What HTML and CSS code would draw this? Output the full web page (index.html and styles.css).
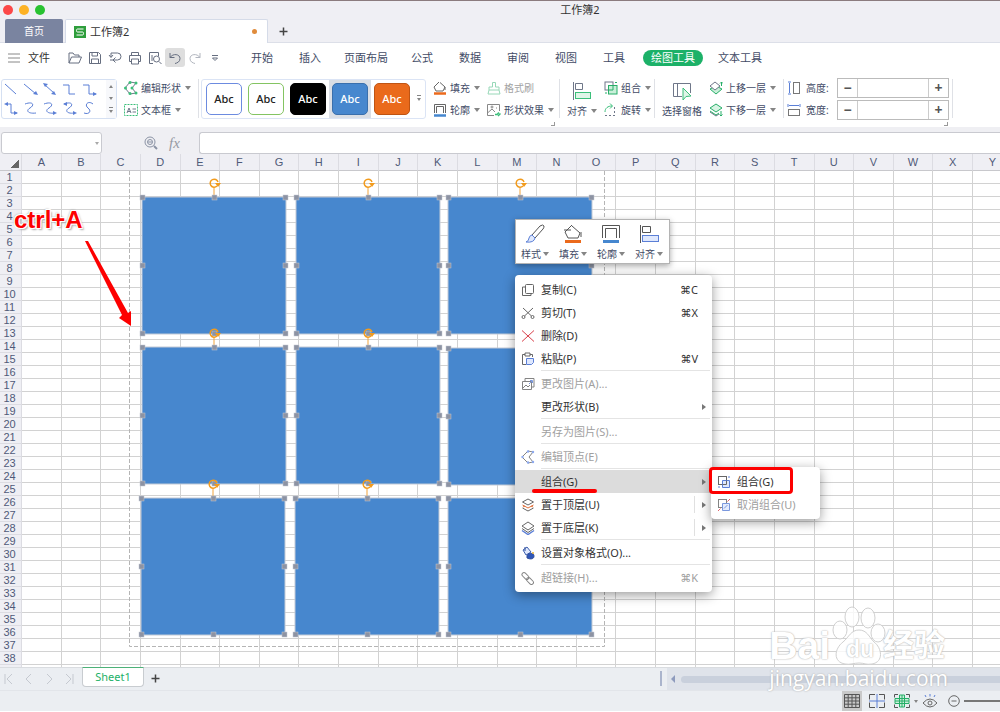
FILE: index.html
```html
<!DOCTYPE html>
<html lang="zh-CN">
<head>
    <meta charset="UTF-8">
    <meta name="viewport" content="width=device-width, initial-scale=1.0">
    <title>工作簿2</title>
    <link rel="stylesheet" href="styles.css">
</head>
<body>
    <header class="titlebar">
        <div class="lights"><i class="red"></i><i class="yellow"></i><i class="green"></i></div>
        <div class="window-title">工作簿2</div>
        <div class="doc-tabs">
            <button class="home-tab">首页</button>
            <button class="doc-tab">
                <svg width="12" height="12" viewBox="0 0 12 12"><rect width="12" height="12" fill="#2f9e3c"/><path d="M9.500 3H3.500Q2.500 3 2.500 4.500T3.500 6H8.500Q9.500 6 9.500 7.500T8.500 9H2.500" fill="none" stroke="#fff"/></svg>
                <span>工作簿2</span><i class="unsaved"></i>
            </button>
            <button class="new-tab" aria-label="新建"><svg width="9" height="9" viewBox="0 0 9 9"><path d="M4.500 .5v8M.5 4.500h8" stroke="#444" stroke-width="1.500"/></svg></button>
        </div>
    </header>

    <nav class="menubar">
        <button class="file-btn"><svg width="12" height="10" viewBox="0 0 12 10"><path d="M0 1h12M0 5h12M0 9h12" stroke="#888"/></svg>文件</button>
        <div class="quick">
            <button aria-label="打开"><svg viewBox="0 0 14 14"><path d="M1 12V2h4l1.500 2H11v2M1 12l2.500-6H13.500L11 12z"/></svg></button>
            <button aria-label="保存"><svg viewBox="0 0 14 14"><path d="M1.500 1.500h9l2 2v9h-11zM4 1.500v3.500h5.500V1.500M3.500 12.500V8h7v4.500"/></svg></button>
            <button aria-label="输出"><svg viewBox="0 0 14 14"><path d="M3 2h6.500a3.300 3.300 0 0 1 0 7H5M3 2v4M1 4l2 2.500L5 4M7.500 6.500L5 9l2.500 2.500M2 9h3"/></svg></button>
            <button aria-label="打印"><svg viewBox="0 0 14 14"><path d="M3.500 4.500v-3h7v3M3.500 10.500h-2v-6h11v6h-2M3.500 8h7v5h-7z"/></svg></button>
            <button aria-label="打印预览"><svg viewBox="0 0 14 14"><path d="M5 12.500H1.500v-11h9V5M4 4v6"/><circle cx="8.500" cy="8" r="3"/><path d="M11 10.500l2.500 2.500"/></svg></button>
            <button class="on" aria-label="撤销"><svg viewBox="0 0 14 14"><path d="M2 2v4.500h4.500M2 6.500C5 2 12 3 12 7.500 12 11 9 12 7 12.500"/></svg></button>
            <button class="dim" aria-label="恢复"><svg viewBox="0 0 14 14"><path d="M12 2v4.500H7.500M12 6.500C9 2 2 3 2 7.500 2 11 5 12 7 12.500"/></svg></button>
            <button aria-label="更多"><svg viewBox="0 0 14 14"><path d="M4 4.500h6M4.500 7L7 9.500 9.500 7z"/></svg></button>
        </div>
        <div class="menus">
            <button>开始</button><button>插入</button><button>页面布局</button><button>公式</button><button>数据</button><button>审阅</button><button>视图</button><button>工具</button><button class="active">绘图工具</button><button>文本工具</button>
        </div>
    </nav>

    <section class="ribbon">
        <div class="line-gallery">
            <svg viewBox="0 0 100 38" width="100" height="38">
                <g fill="none" stroke="#5b7fd6">
                    <path d="M3 4l11 10M22 4l12 10M43 5l9 8M61 5h6v9h6M81 5h6v9h7"/>
                    <path d="M4 24h5v9h6M23 24c8-3 10 1 5 4s-1 6 6 5M42 24c8-3 10 1 5 4s-1 6 6 5M62 24c8-3 10 1 5 4s-1 6 5 5M91 24c-5-4-9 1-5 4s1 7-4 5"/>
                </g>
                <g fill="#5b7fd6">
                    <path d="M36 15l-5-1 3-3zM54 15l-5-1 3-3zM41 3l5 1-3 3zM95 14l-4-2v4zM2 24l4-2v4zM16 33l-4-2v4zM55 33l-4-2v4zM61 24l4-2v4zM75 33l-4-2v4z"/>
                </g>
            </svg>
            <div class="scroller"><i class="caret up"></i><i class="caret"></i><i class="caret more"></i></div>
        </div>
        <div class="tools edit-tools">
            <button><svg viewBox="0 0 14 14"><path d="M12 2L6 1 1 7l5 6 6-1-4-5z" stroke="#6f7789"/><g fill="#3bbf7a"><circle cx="12" cy="2" r="1.500"/><circle cx="6" cy="1.500" r="1.500"/><circle cx="1.500" cy="7" r="1.500"/><circle cx="6" cy="12.500" r="1.500"/><circle cx="12" cy="12" r="1.500"/><circle cx="8" cy="7" r="1.500"/></g></svg>编辑形状<i class="caret"></i></button>
            <button><svg viewBox="0 0 14 14"><path d="M.5 1.500h13v11H.5z" stroke="#3bbf7a" stroke-dasharray="2 1"/><path d="M3 10l2-5 2 5M3.500 8.500h3M8.500 6H12M8.500 9H12" stroke="#6f7789"/></svg>文本框<i class="caret"></i></button>
        </div>
        <i class="sep"></i>
        <div class="style-gallery">
            <button class="st blue-line"><b>Abc</b></button>
            <button class="st green-line"><b>Abc</b></button>
            <button class="st black"><b>Abc</b></button>
            <button class="st blue picked"><b>Abc</b></button>
            <button class="st orange"><b>Abc</b></button>
            <i class="caret more"></i>
        </div>
        <div class="tools paint-tools">
            <button><svg viewBox="0 0 14 14"><path d="M6 1L1 6l2 4h7l2-4-5-4.500M12 6v3" stroke="#666"/><path d="M1 12.500h12" stroke="#eb6a1c" stroke-width="2.500"/></svg>填充<i class="caret"></i></button>
            <button class="dim"><svg viewBox="0 0 14 14"><path d="M5.500 6V1.500h3V6H12v3H2V6zM2 9l-1 4h12l-1-4" stroke="#98d8b8"/></svg>格式刷</button>
            <button><svg viewBox="0 0 14 14"><path d="M1.500 10V1.500h11V10M3.500 10V3.500h7V10" stroke="#666"/><path d="M1 12.500h12" stroke="#4687cf" stroke-width="2.500"/></svg>轮廓<i class="caret"></i></button>
            <button><svg viewBox="0 0 14 14"><path d="M7 12.500H.5v-11h12V8M.5 10L5 6l3 3M9.500 4.500v1" stroke="#888"/><circle cx="5" cy="4" r="1" stroke="#888"/><path d="M8 11.500h2l2-2M11 13l2.500-2.500" stroke="#3bbf7a" stroke-width="1.500"/></svg>形状效果<i class="caret"></i></button>
        </div>
        <i class="corner"></i>
        <i class="sep"></i>
        <button class="big"><svg width="20" height="20" viewBox="0 0 20 20"><path d="M1.500 1v18M3.500 2.500h7v6h-7z" stroke="#6f7789"/><rect x="3.500" y="11.500" width="15" height="6" fill="#e0f5e8" stroke="#3bbf7a"/></svg><span>对齐<i class="caret"></i></span></button>
        <div class="tools">
            <button><svg viewBox="0 0 14 14"><rect x="1" y="1" width="8" height="8" stroke="#6f7789"/><rect x="4.500" y="4.500" width="8.500" height="8.500" fill="#c9efd9" stroke="#27ae68"/><path d="M4.500 9H9V4.500M11 1.500h2M1 12h2" stroke="#27ae68"/></svg>组合<i class="caret"></i></button>
            <button><svg viewBox="0 0 14 14"><path d="M1 9C1 5 4 3 8 3M6 .5L8.500 3 6 5.500" stroke="#3bbf7a"/><path d="M1 12.500h12M10.500 4v9" stroke="#6f7789" stroke-dasharray="2 2"/></svg>旋转<i class="caret"></i></button>
        </div>
        <i class="sep"></i>
        <button class="big"><svg width="20" height="20" viewBox="0 0 20 20"><path d="M10 15.500H1.500v-13h17V12M5.500 2.500v13" stroke="#6f7789"/><path d="M11 7v12l3-3.500 5-.5z" fill="#e0f5e8" stroke="#3bbf7a"/></svg><span>选择窗格</span></button>
        <div class="tools layer-tools">
            <button><svg viewBox="0 0 14 14"><path d="M1 8l6-3 6 3-6 5z" fill="#c9efd9" stroke="#27ae68"/><path d="M1 5l5-4 5 4-5 4z" fill="#fff" stroke="#6f7789"/><path d="M12.500 5V1M11 2.500L12.500 1 14 2.500" stroke="#27ae68"/></svg>上移一层<i class="caret"></i></button>
            <button><svg viewBox="0 0 14 14"><path d="M1 9l6 4 3-2" stroke="#6f7789"/><path d="M1 5l6-4 6 4-6 4z" fill="#d8f4e4" stroke="#27ae68"/><path d="M1 8l6 4 3-2M12 8v5M10.500 11.500L12 13l1.500-1.500" stroke="#27ae68"/></svg>下移一层<i class="caret"></i></button>
        </div>
        <i class="sep"></i>
        <div class="sizes">
            <div class="size-row">
                <svg width="14" height="14" viewBox="0 0 14 14"><path d="M1 1h3M1 13h3M2.500 2v10" stroke="#5b7fd6"/><rect x="6.500" y="1.500" width="6" height="11" stroke="#777"/></svg>
                <label for="height">高度:</label>
                <div class="stepper"><button aria-label="减小高度">−</button><input id="height" type="text"><button aria-label="增大高度">+</button></div>
            </div>
            <div class="size-row">
                <svg width="14" height="14" viewBox="0 0 14 14"><path d="M1 1v3M13 1v3M2 2.500h10" stroke="#5b7fd6"/><rect x="1.500" y="6.500" width="11" height="6" stroke="#777"/></svg>
                <label for="width">宽度:</label>
                <div class="stepper"><button aria-label="减小宽度">−</button><input id="width" type="text"><button aria-label="增大宽度">+</button></div>
            </div>
        </div>
        <i class="corner"></i>
        <i class="sep"></i>
    </section>

    <section class="formula-bar">
        <div class="name-box"><input type="text" aria-label="名称框"><i class="caret"></i></div>
        <div class="formula-tools">
            <svg width="14" height="14" viewBox="0 0 14 14" fill="none" stroke="#8b93a5"><circle cx="6" cy="6" r="5"/><circle cx="6" cy="6" r="2.500"/><path d="M4 6h4" /><path d="M10 10l3 3" stroke-width="2"/></svg>
            <span class="fx">fx</span>
        </div>
        <input class="formula" type="text" aria-label="编辑栏">
    </section>

    <main class="sheet">
        <table class="grid" id="grid"></table>

        <svg class="drawing" width="640" height="500" viewBox="0 0 640 500">
            <defs>
                <g id="box">
                    <rect width="144" height="137" fill="#4787ce" stroke="#c3cad6"/>
                    <path d="M72 0v-9" stroke="#f2a33a"/>
                    <path d="M75 -11a4 4 0 1 1 1-4" fill="none" stroke="#f29b1d" stroke-width="1.500"/>
                    <path d="M73 -14h6l-3 4z" fill="#f29b1d"/>
                    <g fill="#8d93a3" stroke="#c3c8d2" stroke-width=".5">
                        <rect x="-2" y="-2" width="5" height="5"/><rect x="70" y="-2" width="5" height="5"/><rect x="141" y="-2" width="5" height="5"/>
                        <rect x="-2" y="66" width="5" height="5"/><rect x="141" y="66" width="5" height="5"/>
                        <rect x="-2" y="134" width="5" height="5"/><rect x="70" y="134" width="5" height="5"/><rect x="141" y="134" width="5" height="5"/>
                    </g>
                </g>
            </defs>
            <path d="M129.500 17v475.500h475V17" fill="none" stroke="#b5b5b5" stroke-dasharray="4 2"/>
            <use href="#box" x="142" y="43"/><use href="#box" x="296" y="43"/><use href="#box" x="448" y="43"/>
            <use href="#box" x="142" y="193"/><use href="#box" x="296" y="193"/><use href="#box" x="448" y="194"/>
            <use href="#box" x="141" y="344"/><use href="#box" x="295" y="344"/><use href="#box" x="448" y="344"/>
            <path class="arrow" d="M85 87l3 0 40 72 3-2v15l-12-8 3-3z" fill="#fd0000"/>
        </svg>
        <div class="note">ctrl+A</div>

        <div class="mini-bar">
            <button><svg viewBox="0 0 22 22"><path d="M8 12l8-9q3-2 4 0 0 2-1 3l-8 9z" stroke="#555"/><path d="M8 12l3 3q-1 5-9 4 3-1 3-4 1-3 3-3z" fill="#dfe8fd" stroke="#5b7fd6"/></svg><span>样式<i class="caret"></i></span></button>
            <button><svg viewBox="0 0 22 22"><path d="M10 2L3 9l3 6h10l2-5-8-7M2 7h7M19 9v5" stroke="#555"/><path d="M3 18.500h16" stroke="#eb6a1c" stroke-width="3"/></svg><span>填充<i class="caret"></i></span></button>
            <button><svg viewBox="0 0 22 22"><path d="M2.500 15V2.500h17V15M5.500 15V5.500h11V15" stroke="#555"/><path d="M3 18.500h16" stroke="#4687cf" stroke-width="3"/></svg><span>轮廓<i class="caret"></i></span></button>
            <button><svg viewBox="0 0 22 22"><path d="M2.500 2v18M4.500 3.500h8v6h-8z" stroke="#555"/><rect x="4.500" y="12.500" width="16" height="6" fill="#dfe8fd" stroke="#5b7fd6"/></svg><span>对齐<i class="caret"></i></span></button>
        </div>

        <div class="menu context-menu">
            <button><svg viewBox="0 0 14 14"><rect x="4.500" y="1.500" width="8" height="9" rx="1"/><path d="M4 4H1.500v8.500H10V11"/></svg>复制(C)<kbd>⌘C</kbd></button>
            <button><svg viewBox="0 0 14 14"><path d="M2 2l8.500 8M12 2l-8.500 8"/><circle cx="2.500" cy="11" r="1.500"/><circle cx="11.500" cy="11" r="1.500"/></svg>剪切(T)<kbd>⌘X</kbd></button>
            <button><svg viewBox="0 0 14 14"><path d="M1 1.500l12 11M13 1.500l-12 11" stroke="#d9404a"/></svg>删除(D)</button>
            <button><svg viewBox="0 0 14 14"><path d="M4 2.500H1.500v10H5M9 2.500h2.500V5M4 1h5v3H4z"/><path d="M5.500 6.500h7v4l-2 2h-5z" fill="#dfe8fd" stroke="#5b7fd6"/></svg>粘贴(P)<kbd>⌘V</kbd></button>
            <hr>
            <button disabled><svg viewBox="0 0 14 14"><path d="M4 4V1.500h9V10h-2.500M1.500 4.500h9v8h-9zM2 11l3-3 2 2 2-2"/><path d="M8 7l3-3M9 3.500h2.500V6" stroke="#5b7fd6"/></svg>更改图片(A)...</button>
            <button><svg></svg>更改形状(B)<i class="sub"></i></button>
            <hr>
            <button disabled><svg></svg>另存为图片(S)...</button>
            <hr>
            <button disabled><svg viewBox="0 0 14 14"><path d="M12 2L7 1 1 7l6 6 5-1-4-5z"/><g fill="#6f93ea" stroke="none"><circle cx="12" cy="2" r="1.200"/><circle cx="7" cy="1.500" r="1.200"/><circle cx="1.500" cy="7" r="1.200"/><circle cx="7" cy="12.500" r="1.200"/><circle cx="12" cy="12" r="1.200"/></g></svg>编辑顶点(E)</button>
            <hr>
            <button class="hover"><svg></svg>组合(G)<i class="sub"></i></button>
            <button class="split"><svg viewBox="0 0 14 14"><path d="M1.500 10L7 13l5.500-3M1.500 4L7 1l5.500 3L7 7z"/><path d="M1.500 7L7 10l5.500-3M2 9l2-1M12 9l-2-1" stroke="#e0703a"/></svg>置于顶层(U)<i class="sub"></i></button>
            <button class="split"><svg viewBox="0 0 14 14"><path d="M1 5l6-4 6 4-6 4zM1 7.500l6 4 6-4"/><path d="M1 9.500l6 4 6-4" stroke="#5b7fd6" stroke-width="1.500"/></svg>置于底层(K)<i class="sub"></i></button>
            <hr>
            <button><svg viewBox="0 0 14 14"><path d="M2 4l4-3 4 5-5 3z" fill="#dfe8fd" stroke="#3e5fae"/><path d="M4 1v4M6 10c0-3 7-4 7 0s-5 3-7 2z" fill="#2e56b8" stroke="#2e4d99"/><circle cx="12" cy="7" r="1" fill="#e8b33a" stroke="none"/></svg>设置对象格式(O)...</button>
            <hr>
            <button disabled><svg viewBox="0 0 14 14"><rect x="-1" y="3" width="8" height="4" rx="2" transform="rotate(45 3 5) translate(1 -1)"/><rect x="5" y="8" width="8" height="4" rx="2" transform="rotate(45 9 10)"/></svg>超链接(H)...<kbd>⌘K</kbd></button>
        </div>

        <div class="menu sub-menu">
            <button><svg viewBox="0 0 14 14"><rect x="1.500" y="1.500" width="8" height="8"/><path d="M5.500 5.500h7v7h-7z" fill="#dfe8fd" stroke="#5b7fd6"/><path d="M5.500 9.500h4v-4"/><path d="M11 2h2M1 12h2" stroke="#5b7fd6"/></svg>组合(G)</button>
            <button disabled><svg viewBox="0 0 14 14"><rect x="1.500" y="1.500" width="8" height="8"/><path d="M5.500 5.500h7v7h-7z" fill="#dfe8fd" stroke="#5b7fd6"/><path d="M7 10.500l3.500-3.500" stroke="#5b7fd6"/><path d="M10.500 3.500L13 1M1 13l2.500-2.500" stroke="#d9404a"/></svg>取消组合(U)</button>
        </div>
        <i class="mark-line"></i>
        <i class="mark-box"></i>
    </main>

    <footer class="tabs-bar">
        <div class="nav-btns">
            <button aria-label="第一张"><svg viewBox="0 0 10 12"><path d="M1 1v10M8 1L3 6l5 5"/></svg></button>
            <button aria-label="上一张"><svg viewBox="0 0 10 12"><path d="M7 1L2 6l5 5"/></svg></button>
            <button aria-label="下一张"><svg viewBox="0 0 10 12"><path d="M3 1l5 5-5 5"/></svg></button>
            <button aria-label="最后一张"><svg viewBox="0 0 10 12"><path d="M9 1v10M2 1l5 5-5 5"/></svg></button>
        </div>
        <button class="sheet-tab">Sheet1</button>
        <button class="add-sheet" aria-label="添加工作表"><svg width="9" height="9" viewBox="0 0 9 9"><path d="M4.500 .5v8M.5 4.500h8" stroke="#444" stroke-width="1.500"/></svg></button>
        <i class="splitter"></i>
        <div class="hscroll"><i class="left"></i><i class="thumb"></i></div>
    </footer>

    <footer class="status">
        <div class="views">
            <button class="on" aria-label="普通视图"><svg viewBox="0 0 16 14"><path d="M.5 .5h15v13H.5zM.5 3.800h15M.5 7h15M.5 10.200h15M4.200 .5v13M8 .5v13M11.800 .5v13" stroke="#555"/></svg></button>
            <button aria-label="分页预览"><svg viewBox="0 0 16 14"><path d="M6 .5H.5v5M.5 8.500v5H6M10 .5h5.500v5M15.500 8.500v5H10" stroke="#555"/><path d="M8 0v14M0 7h16" stroke="#5b7fd6"/></svg></button>
            <button aria-label="阅读模式"><svg viewBox="0 0 16 14"><path d="M5.500 1h5v12h-5zM1 4.500h14v5H1zM8 1v12M1 7h14" fill="#c9efd9" stroke="#27ae68"/><path d="M4 .5H.5v3M.5 10.500v3H4M12 .5h3.500v3M15.500 10.500v3H12" stroke="#555"/></svg></button>
            <i class="caret"></i>
            <button aria-label="护眼模式"><svg viewBox="0 0 16 14"><path d="M1 9q7-8 14 0-7 8-14 0z" stroke="#666"/><circle cx="8" cy="9" r="2" stroke="#666"/><path d="M8 0v2.500M3 1l1 2M13 1l-1 2" stroke="#5b7fd6"/></svg></button>
        </div>
        <button class="zoom-out" aria-label="缩小"><svg width="12" height="12" viewBox="0 0 12 12"><circle cx="6" cy="6" r="5.300" fill="none" stroke="#666"/><path d="M3.500 6h5" stroke="#666"/></svg></button>
        <div class="zoom-wrap"><input class="zoom" type="range" aria-label="缩放"></div>
    </footer>

    <div class="watermark">
        <div class="brand">
            <span class="bai">Bai</span>
            <span class="paw"><svg width="56" height="60" viewBox="0 0 56 60"><g fill="#fff" fill-opacity=".8" stroke="#d0d0d0"><ellipse cx="10" cy="24" rx="7" ry="9"/><ellipse cx="22" cy="11" rx="7" ry="10"/><ellipse cx="38" cy="12" rx="7" ry="10"/><ellipse cx="48" cy="27" rx="7" ry="9"/><path d="M29 24c8 0 10 7 15 12 8 6 10 20-2 22-6 1-8-1-13-1s-9 2-14 1C3 56 4 43 13 36c6-5 8-12 16-12z"/></g></svg><span class="du">du</span></span>
            <span class="jy">经验</span>
        </div>
        <div class="url">jingyan.baidu.com</div>
    </div>

    <script>
        const grid = document.getElementById("grid");
        const letters = "ABCDEFGHIJKLMNOPQRSTUVWXY".split("");
        const rows = 39;

        let html = "<thead><tr><th class='all'></th>";
        letters.forEach(function(l) {
            html += "<th>" + l + "</th>";
        });
        html += "</tr></thead><tbody>";
        for (let r = 1; r <= rows; r++) {
            html += "<tr><th>" + r + "</th>" + "<td></td>".repeat(letters.length) + "</tr>";
        }
        grid.innerHTML = html + "</tbody>";
    </script>
</body>
</html>
```

FILE: styles.css
```css
* {
    box-sizing: border-box;
}
body {
    margin: 0;
    height: 100vh;
    display: flex;
    flex-direction: column;
    overflow: hidden;
    position: relative;
    background: #fff;
    color: #424b66;
    font-family: "Noto Sans", "Noto Sans CJK SC", sans-serif;
    font-size: 11px;
    line-height: 16px;
}
button, input {
    font: inherit;
    color: inherit;
    margin: 0;
    padding: 0;
    border: 0;
    background: none;
    min-width: 0;
}
button {
    display: flex;
    align-items: center;
    white-space: nowrap;
}
svg {
    flex: none;
    display: block;
    fill: none;
}
i {
    flex: none;
    display: block;
}
.caret {
    border: 3px solid transparent;
    border-top: 4px solid #858585;
    border-bottom: 0;
}

/* title bar */
.titlebar {
    position: relative;
    flex: none;
    height: 43px;
    background: #efeff4;
    border-top: 1px solid #8b7b7e;
    border-bottom: 1px solid #dcdfe8;
}
.lights {
    display: flex;
    gap: 6px;
    padding: 4px 3px 0;
}
.lights i {
    width: 10px;
    height: 10px;
    border-radius: 50%;
}
.red { background: #fc4848; }
.yellow { background: #fdb225; }
.green { background: #28c231; }
.window-title {
    position: absolute;
    top: 1px;
    left: 0;
    right: 0;
    padding-left: 160px;
    text-align: center;
    color: #333;
}
.doc-tabs {
    display: flex;
    padding: 4px 0 0 5px;
    height: 28px;
}
.home-tab {
    width: 58px;
    justify-content: center;
    background: #7a84a0;
    color: #fff;
    font-size: 10px;
    border-radius: 2px 2px 0 0;
}
.doc-tab {
    width: 203px;
    margin-left: 2px;
    padding: 0 10px 0 8px;
    gap: 4px;
    background: #fff;
    border: 1px solid #d5dbe8;
    border-bottom: 0;
    border-radius: 2px 2px 0 0;
    color: #333;
}
.unsaved {
    width: 5px;
    height: 5px;
    margin-left: auto;
    border-radius: 50%;
    background: #e08c3c;
}
.new-tab {
    padding: 0 11px;
}

/* menu row */
.menubar {
    flex: none;
    display: flex;
    align-items: center;
    height: 29px;
    padding-left: 8px;
}
.file-btn {
    gap: 8px;
    color: #333;
}
.quick {
    display: flex;
    padding-left: 15px;
}
.quick button {
    width: 20px;
    height: 19px;
    justify-content: center;
    border-radius: 3px;
}
.quick svg {
    width: 14px;
    height: 14px;
    stroke: #666e80;
}
.quick .on {
    background: #dedede;
}
.quick .dim {
    opacity: .5;
}
.menus {
    display: flex;
    padding-left: 13px;
}
.menus button {
    min-width: 48px;
    padding: 0 10px;
    justify-content: center;
}
.menus .active {
    margin: 0 5px;
    padding: 0 8px;
    border-radius: 8px;
    background: #1cb168;
    color: #fff;
}

/* ribbon */
.ribbon {
    flex: none;
    display: flex;
    align-items: flex-start;
    height: 55px;
    padding: 7px 0 0 1px;
    font-size: 10px;
}
.sep {
    width: 1px;
    height: 39px;
    background: #dfe1e6;
}
.line-gallery {
    display: flex;
    justify-content: space-between;
    width: 116px;
    height: 40px;
    border: 1px solid #d5e0f2;
    border-radius: 3px;
}
.scroller {
    display: flex;
    flex-direction: column;
    align-items: center;
    justify-content: space-around;
    width: 10px;
    background: #f7f8fb;
}
.scroller .caret, .style-gallery .caret {
    border-width: 3px 2px 0;
}
.scroller .caret.up {
    border-width: 0 2px 3px;
    border-bottom: 3px solid #858585;
}
.caret.more {
    position: relative;
}
.caret.more::before {
    content: "";
    position: absolute;
    left: -2px;
    top: -6px;
    width: 4px;
    height: 1px;
    background: #858585;
}
.tools {
    display: grid;
    row-gap: 6px;
    padding-top: 1px;
}
.tools button {
    gap: 3px;
    height: 16px;
}
.tools svg {
    width: 14px;
    height: 14px;
}
.tools .caret {
    margin-left: 1px;
}
.tools .dim {
    color: #a3a3a3;
}
.edit-tools {
    margin: 0 7px;
}
.style-gallery {
    display: flex;
    align-items: center;
    width: 225px;
    height: 40px;
    margin-left: 2px;
    border: 1px solid #dbe4f5;
    border-radius: 3px;
}
.st {
    height: 38px;
    padding: 0 3px;
}
.st b {
    width: 36px;
    height: 32px;
    border: 1px solid #6c8be0;
    border-radius: 5px;
    line-height: 30px;
    font-size: 11px;
    font-weight: 500;
    text-align: center;
    color: #222;
    background: #fff;
}
.st.green-line b { border-color: #84c462; }
.st.black b { background: #000; border-color: #000; color: #fff; }
.st.blue b { background: #4787ce; border-color: #3a6fac; color: #fff; }
.st.orange b { background: #ea6a1b; border-color: #bf5413; color: #fff; }
.st.picked { background: #dadee5; }
.style-gallery .st:first-child {
    margin-left: 1px;
}
.style-gallery .caret {
    margin-left: 4px;
}
.paint-tools {
    grid-template-columns: auto auto;
    column-gap: 7px;
    margin: 0 6px 0 7px;
}
.corner {
    width: 4px;
    height: 4px;
    margin: 43px 0 0 -9px;
    border: solid #999;
    border-width: 0 1px 1px 0;
}
.corner + .sep {
    margin-left: 4px;
}
.big {
    flex-direction: column;
    margin: 2px 7px 0;
    gap: 2px;
}
.big span {
    display: flex;
    align-items: center;
    gap: 4px;
}
.tools + .sep {
    margin-left: 3px;
}
.edit-tools + .sep {
    margin-left: 0;
}
.layer-tools + .sep {
    margin-left: 7px;
}
.sizes {
    margin: -1px 0 0 3px;
}
.size-row {
    display: flex;
    align-items: center;
    height: 20px;
    margin-bottom: 2px;
}
.size-row label {
    width: 31px;
    margin-left: 5px;
    white-space: nowrap;
}
.stepper {
    display: flex;
    width: 112px;
    height: 20px;
    border: 1px solid #bbb;
}
.stepper button {
    width: 19px;
    justify-content: center;
    font-size: 14px;
    font-weight: bold;
    color: #555;
}
.stepper input {
    flex: 1;
    border: solid #ccc;
    border-width: 0 1px;
}
.sizes + .corner {
    margin-left: -5px;
}

/* name box and formula */
.formula-bar {
    flex: none;
    display: flex;
    align-items: center;
    height: 27px;
    padding: 5px 0 0 1px;
    background: #efeff3;
}
.name-box {
    display: flex;
    align-items: center;
    width: 101px;
    height: 22px;
    padding-right: 2px;
    border: 1px solid #c9cad0;
    border-radius: 3px;
    background: #fff;
}
.name-box input {
    flex: 1;
}
.name-box .caret {
    border-width: 3px 2px 0;
    opacity: .7;
}
.formula-tools {
    display: flex;
    align-items: center;
    gap: 11px;
    width: 97px;
    padding-left: 42px;
}
.fx {
    font-family: "Liberation Serif", serif;
    font-style: italic;
    font-size: 15px;
    color: #9599a3;
}
.formula {
    flex: 1;
    height: 22px;
    border: 1px solid #c9cad0;
    border-right: 0;
    border-radius: 3px 0 0 3px;
    background: #fff;
}

/* cells */
.sheet {
    position: relative;
    flex: 1;
    min-height: 0;
    overflow: hidden;
}
.grid {
    table-layout: fixed;
    width: calc(100% + 13px);
    border-collapse: separate;
    border-spacing: 0;
    font-family: "Liberation Sans", Arial, sans-serif;
    font-size: 11px;
    line-height: 12px;
}
.grid th, .grid td {
    height: 13px;
    padding: 0;
    border: solid #d2d2d2;
    border-width: 0 1px 1px 0;
}
.grid th {
    background: #efeff4;
    color: #4f5a78;
    font-weight: normal;
    border-color: #dcdce2;
}
.grid tbody th {
    padding-right: 2px;
}
.grid thead th {
    height: 17px;
    border-bottom-color: #c8c8cc;
}
.grid .all {
    width: 22px;
    background: linear-gradient(135deg, transparent 50%, #666 50%) 10px 5px / 9px 9px no-repeat #efeff4;
}
.drawing {
    position: absolute;
    left: 0;
    top: 0;
}
.note {
    position: absolute;
    left: 14px;
    top: 52px;
    font: bold 24px/28px "Liberation Sans", Arial, sans-serif;
    color: #fd0000;
    text-shadow: 1px 1px 0 #fff, -1px -1px 0 #fff, 1px -1px 0 #fff, -1px 1px 0 #fff, 2px 2px 2px #aaa, -1px -1px 2px #aaa;
}

/* popups */
.mini-bar {
    position: absolute;
    left: 515px;
    top: 65px;
    display: flex;
    padding: 3px 1px 1px 0;
    border: 1px solid #b4b4b4;
    background: #fff;
    box-shadow: 0 2px 6px rgba(0, 0, 0, .35);
    font-size: 10px;
}
.mini-bar button {
    flex-direction: column;
    width: 38px;
    gap: 1px;
}
.mini-bar svg {
    width: 22px;
    height: 22px;
}
.mini-bar span {
    display: flex;
    align-items: center;
    gap: 2px;
}
.menu {
    position: absolute;
    padding: 3px 0;
    background: #fff;
    border-radius: 4px;
    box-shadow: 0 3px 12px rgba(0, 0, 0, .4);
    color: #333;
}
.menu button {
    position: relative;
    width: 100%;
    height: 23px;
    padding: 0 14px 0 6px;
    gap: 6px;
}
.menu svg {
    width: 14px;
    height: 14px;
    stroke: #666;
}
.menu button:disabled {
    color: #a0a0a0;
}
.menu button:disabled svg {
    opacity: .8;
}
.menu hr {
    height: 1px;
    margin: 0 2px 1px 26px;
    border: 0;
    background: #e4e4e4;
}
.menu kbd {
    margin-left: auto;
    font: inherit;
    font-family: "Noto Sans", "DejaVu Sans", sans-serif;
}
.context-menu {
    left: 515px;
    top: 121px;
    width: 197px;
}
.context-menu .hover {
    background: #dcdcdc;
}
.sub {
    position: absolute;
    right: 6px;
    border: 3px solid transparent;
    border-left: 4px solid #777;
    border-right: 0;
}
.split::after {
    content: "";
    position: absolute;
    right: 17px;
    height: 17px;
    border-left: 1px solid #e0e0e0;
}
.sub-menu {
    left: 711px;
    top: 313px;
    width: 109px;
}
.mark-line {
    position: absolute;
    left: 532px;
    top: 335px;
    width: 65px;
    height: 4px;
    border-radius: 2px;
    background: #fd0000;
}
.mark-box {
    position: absolute;
    left: 709px;
    top: 313px;
    width: 84px;
    height: 27px;
    border: 3px solid #fd0000;
    border-radius: 4px;
}

/* sheet tabs and status */
.tabs-bar {
    flex: none;
    display: flex;
    height: 23px;
    background: #ebeef2;
    border-top: 1px solid #d9dce0;
}
.nav-btns {
    display: flex;
    gap: 10px;
    padding-left: 4px;
    width: 82px;
}
.nav-btns svg {
    width: 10px;
    height: 12px;
    stroke: #c5c9d0;
}
.sheet-tab {
    width: 62px;
    height: 20px;
    margin-top: -1px;
    justify-content: center;
    border: 1px solid #c8ccd0;
    border-top-color: #4db178;
    border-radius: 0 0 4px 4px;
    background: #fff;
    color: #1cb168;
}
.add-sheet {
    height: 20px;
    padding: 0 7px;
}
.splitter {
    width: 2px;
    height: 15px;
    margin: 3px 5px 0 auto;
    background: #aab4cc;
}
.hscroll {
    display: flex;
    align-items: center;
    width: 333px;
    padding-left: 4px;
    background: #dfe3ea;
}
.hscroll .left {
    border: 4px solid transparent;
    border-right: 4px solid #8e9bbd;
    border-left: 0;
}
.hscroll .thumb {
    flex: 1;
    height: 7px;
    margin-left: 6px;
    border-radius: 4px 0 0 4px;
    background: #c9d0dc;
}
.status {
    flex: none;
    display: flex;
    align-items: center;
    justify-content: flex-end;
    height: 22px;
    background: #ebeef2;
    border-top: 1px solid #e2e5ea;
    border-bottom: 1px solid #fff;
}
.views {
    display: flex;
    align-items: center;
    gap: 5px;
}
.views button {
    width: 20px;
    height: 20px;
    justify-content: center;
}
.views svg {
    width: 16px;
    height: 14px;
}
.views .on {
    background: #c9c9c9;
}
.views .caret {
    border-width: 3px 2px 0;
    margin: 0 -3px;
}
.zoom-out {
    margin: 0 4px 0 8px;
}
.zoom-wrap {
    display: flex;
    width: 36px;
    overflow: hidden;
}
.zoom {
    flex: none;
    width: 120px;
    height: 12px;
    appearance: none;
}
.zoom::-webkit-slider-runnable-track {
    height: 2px;
    background: #777;
}
.zoom::-webkit-slider-thumb {
    appearance: none;
    width: 8px;
    height: 12px;
    margin-top: -5px;
    background: #666;
}

/* watermark */
.watermark {
    position: absolute;
    right: 52px;
    bottom: 22px;
    color: #fff;
    text-shadow: 0 0 2px #b5b5b5, 0 0 1px #c5c5c5;
    font-family: "Liberation Sans", "Noto Sans CJK SC", sans-serif;
    pointer-events: none;
}
.brand {
    display: flex;
    align-items: flex-end;
    font-weight: bold;
}
.bai {
    font-size: 39px;
    line-height: 40px;
}
.paw {
    position: relative;
    margin-right: -3px;
}
.du {
    position: absolute;
    left: 16px;
    bottom: 4px;
    font-size: 23px;
    line-height: 26px;
}
.jy {
    font-size: 31px;
    line-height: 40px;
}
.url {
    font-family: "Open Sans", sans-serif;
    font-size: 21px;
    line-height: 24px;
}
```
